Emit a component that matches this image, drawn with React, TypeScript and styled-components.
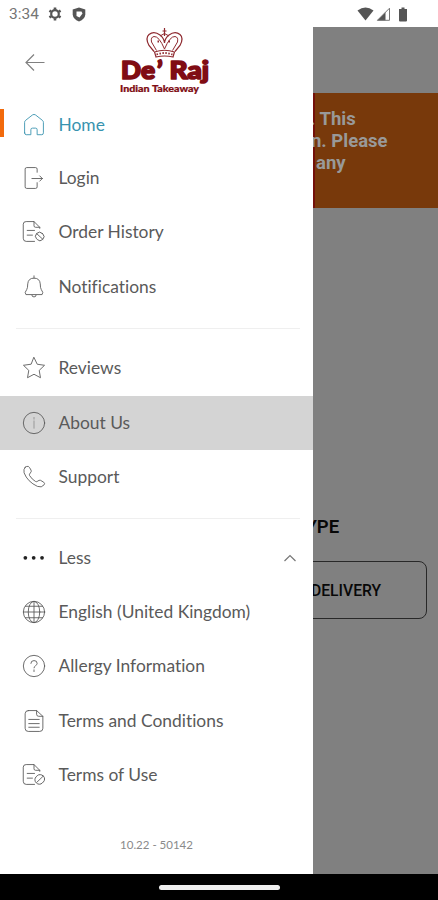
import React from 'react';
import styled, { createGlobalStyle } from 'styled-components';

const GlobalStyle = createGlobalStyle`
  * { box-sizing: border-box; }
  body { margin: 0; background: #fff; font-family: Lato, sans-serif; overflow: hidden; }
`;

const Screen = styled.div`
  width: 438px;
  height: 900px;
  display: flex;
  flex-direction: column;
  overflow: hidden;
`;

const StatusBar = styled.header`
  height: 27px;
  flex: none;
  display: flex;
  align-items: center;
  justify-content: space-between;
  padding: 1px 30px 0 9px;
  color: #757575;
  font: 400 15.5px Roboto, sans-serif;
`;

const StatusGroup = styled.div<{ $gap: number }>`
  display: flex;
  align-items: center;
  gap: ${(p) => p.$gap}px;
`;

const Content = styled.div`
  flex: 1;
  min-height: 0;
  display: flex;
`;

const Drawer = styled.nav`
  width: 313px;
  flex: none;
  background: #fff;
  display: flex;
  flex-direction: column;
`;

const DrawerHeader = styled.div`
  height: 71px;
  flex: none;
  display: flex;
  padding-left: 24px;
`;

const BackIcon = styled.svg`
  margin: 25px 72px 0 0;
  flex: none;
`;

const Row = styled.div<{ $active?: boolean; $selected?: boolean; $height?: number }>`
  height: ${(p) => p.$height ?? 54.5}px;
  flex: none;
  display: flex;
  align-items: center;
  color: ${(p) => (p.$active ? '#3893af' : '#5a5a5a')};
  background: ${(p) => (p.$selected ? '#d4d4d4' : 'transparent')};
  font-size: 17.4px;
  font-variant-ligatures: none;
  line-height: 24px;
`;

const Marker = styled.span<{ $on?: boolean }>`
  width: 4px;
  height: 28px;
  margin: -3px 18px 0 0;
  background: ${(p) => (p.$on ? '#f26a0c' : 'transparent')};
`;

const Label = styled.span`
  flex: 1;
  margin: 0 0 0 12.5px;
  white-space: nowrap;
`;

const Chevron = styled.svg`
  margin-right: 16px;
`;

const Divider = styled.hr`
  width: 284px;
  height: 1px;
  flex: none;
  border: 0;
  margin: 13.5px 0 12.5px 16px;
  background: #efefef;
`;

const Version = styled.div`
  margin-top: 34.5px;
  text-align: center;
  font-size: 11.5px;
  line-height: 16px;
  color: #8a8a8a;
`;

const Dimmed = styled.main`
  flex: 1;
  min-width: 0;
  overflow: hidden;
  background: #808080;
  display: flex;
  flex-direction: column;
  font-family: Roboto, sans-serif;
`;

const Banner = styled.section`
  height: 115px;
  flex: none;
  margin-top: 66px;
  padding-top: 15px;
  border-left: 2px solid #74100a;
  background: #78390b;
  color: #999;
  font-weight: 700;
  font-size: 18.5px;
  line-height: 22px;
`;

const BannerLine = styled.div<{ $shift: number }>`
  margin-left: ${(p) => p.$shift}px;
  white-space: nowrap;
`;

const SectionTitle = styled.h2`
  margin: 308px 0 0 -7.5px;
  font-size: 18.5px;
  line-height: 22px;
  font-weight: 600;
  color: #080808;
`;

const DeliveryButton = styled.div`
  width: 134px;
  height: 58px;
  flex: none;
  margin: 23px 0 0 -20px;
  padding: 1px 0 0 17px;
  border: 1px solid #282828;
  border-radius: 8px;
  display: flex;
  align-items: center;
  font-size: 15.7px;
  font-weight: 500;
  color: #080808;
`;

const NavBar = styled.footer`
  height: 26px;
  flex: none;
  display: flex;
  align-items: center;
  justify-content: center;
  background: #000;
`;

const HomeHandle = styled.span`
  width: 121px;
  height: 5px;
  border-radius: 3px;
  background: #eee;
`;

type IconName =
  | 'home' | 'login' | 'history' | 'terms' | 'bell' | 'star' | 'info'
  | 'phone' | 'dots' | 'globe' | 'help' | 'document';

const notedPage = (
  <>
    <path d="M12 20.500H4Q1.200 20.500 1.200 17.500V4Q1.200 1.500 4 1.500H11.500L17 7V8M11.500 1.500V5.500Q11.500 7 13 7H17" />
    <path d="M5 10H12M5 14.500H10" />
  </>
);

const shapes: Record<IconName, React.ReactNode> = {
  home: <path d="M2.500 19V9Q2.500 7.800 3.500 7L10 1.900Q11.500 .8 13 1.900L19.500 7Q20.500 7.800 20.500 9V19Q20.500 20.800 19 20.800H14.500V16Q14.500 14.500 13 14.500H10Q8.500 14.500 8.500 16V20.800H4Q2.500 20.800 2.500 19Z" />,
  login: <path d="M14.500 6V3Q14.500 1.500 13 1.500H4.500Q3 1.500 3 3V20Q3 21.500 4.500 21.500H13Q14.500 21.500 14.500 20V16M9.500 12H19.500M17 9.500 19.500 12 17 14.500" />,
  history: <>{notedPage}<rect x="13" y="12" width="8" height="7.500" rx="3.500" transform="rotate(45 17 15.750)" /><path d="m14 13 6 5.500" /></>,
  terms: <>{notedPage}<rect x="12.800" y="11" width="8.400" height="9.400" rx="4" transform="rotate(45 17 15.700)" /><path d="m14.200 18.500 5.800-5.600" /></>,
  bell: <path d="M11.500 .8V3M3.500 18.500Q2 17 4.500 14Q5.500 12.500 5.500 8.500Q6 3 11.500 3T17.500 8.500Q17.500 12.500 18.500 14Q21 17 19.500 18.500ZM9.500 19.500Q9.500 21 11.500 21T13.500 19.500" />,
  star: <path d="m11.500 1.500 3.100 6.400 7 1-5.100 4.900 1.200 7-6.200-3.300-6.200 3.300 1.200-7-5.100-4.900 7-1Z" />,
  info: <><circle cx="11.500" cy="11.500" r="10.200" /><path opacity=".55" d="M11.500 6.200V7.800M11.500 9.500V16.500" /></>,
  phone: <path d="M3 2.200 4.500 1.400Q6.200 .8 7.200 2.400L8.700 5Q9.300 6.300 8 7.600T7.200 10Q9.500 13.800 13 15.800Q14.200 16.400 15.200 15.400T17.600 14.600L20.800 16.500Q22.300 17.700 21.200 19Q18.800 22.100 14.800 20.500Q5.300 16.100 2 7.500Q1.200 4 3 2.200Z" />,
  dots: <g fill="#222" stroke="none"><circle cx="3.200" cy="11.300" r="1.800" /><circle cx="11.200" cy="11.300" r="1.800" /><circle cx="19.200" cy="11.300" r="1.800" /></g>,
  globe: <><circle cx="11.500" cy="11.500" r="10.200" /><ellipse cx="11.500" cy="11.500" rx="5.500" ry="10.200" /><path d="M11.500 1.300V21.700M1.300 11.500H21.700M3.300 6H19.700M3.300 17H19.700" /></>,
  help: <><circle cx="11.500" cy="11.500" r="10.200" /><path d="M8.500 9Q8.500 6.300 11.500 6.300T14.500 9Q14.500 10.300 13 11.200T11.500 13.300M11.500 15.200V16.800" /></>,
  document: <><path d="M6 1.500H14L20 7V18.500Q20 21.500 17 21.500H6Q3 21.500 3 18.500V4.500Q3 1.500 6 1.500ZM14 1.500V5Q14 7 16 7H20" /><path d="M6.500 10H16.500M6.500 14H16.500M6.500 17.500H16.500" /></>,
};

const Icon = ({ name }: { name: IconName }) => (
  <svg width="24" height="24" viewBox="0 0 23 23" fill="none" stroke="currentColor" strokeWidth=".85" strokeLinejoin="round" strokeLinecap="round">
    {shapes[name]}
  </svg>
);

interface ItemProps {
  icon: IconName;
  text: string;
  active?: boolean;
  selected?: boolean;
  expanded?: boolean;
  height?: number;
}

const MenuItem = ({ icon, text, active, selected, expanded, height }: ItemProps) => (
  <Row $active={active} $selected={selected} $height={height}>
    <Marker $on={active} />
    <Icon name={icon} />
    <Label>{text}</Label>
    {expanded && (
      <Chevron width="14" height="8" viewBox="0 0 14 8" fill="none" stroke="#777" strokeWidth="1.200">
        <path d="m1.500 7 5.500-5.500L12.500 7" />
      </Chevron>
    )}
  </Row>
);

const Logo = () => (
  <svg width="96" height="71" viewBox="117 27 96 71" fill="#800d14">
    <g fill="none" stroke="#8f2a30" strokeWidth="1.200">
      <path d="M164.500 28V36M162.500 31H166.500M154 51.500 149 45.500Q145 38 149 34.500Q154 30.500 160 35Q164 38 164.500 43Q165 38 169 35Q175 30.500 180 34.500Q184 38 180 45.500L175 51.500" />
      <path strokeWidth="1" d="M156.500 50.500 151.500 42Q150.500 37 154 36.500Q159 36 164.500 49Q170 36 175 36.500Q178.500 37 177.500 42L172.500 50.500M160 36 164.500 33.500 169 36" />
      <path d="M154.500 52Q164.500 48.500 174.500 52L173 57Q164.500 55 156 57Z" />
      <path strokeWidth="1.800" strokeDasharray="1.500 1.500" d="M156.500 54.500Q164.500 51.500 172.500 54.500M157.500 41.500H160.500M168.500 41.500H171.500" />
    </g>
    <g fontFamily="Lato, sans-serif" fontWeight="900" stroke="#800d14" strokeLinejoin="round">
      <text x="121" y="79.200" fontSize="25" strokeWidth="1.700" textLength="34" lengthAdjust="spacingAndGlyphs">De</text>
      <text x="157" y="79.200" fontSize="25" strokeWidth="1.700">’</text>
      <text x="169.500" y="79.200" fontSize="25" strokeWidth="1.700" textLength="39.500" lengthAdjust="spacingAndGlyphs">Raj</text>
      <text x="120" y="91.500" fontSize="8.800" strokeWidth=".2" textLength="79" lengthAdjust="spacingAndGlyphs">Indian Takeaway</text>
    </g>
  </svg>
);

export default function App() {
  return (
    <Screen>
      <GlobalStyle />
      <StatusBar>
        <StatusGroup $gap={9.5}>
          <span>3:34</span>
          <svg width="14" height="14" viewBox="0 0 14 14" fill="none" stroke="#555">
            <circle cx="7" cy="7" r="3.800" strokeWidth="2.200" />
            <path strokeWidth="2.600" d="M7 .5V2.500M7 11.500V13.500M1.400 3.700 3.100 4.700M10.900 9.300 12.600 10.300M1.400 10.300 3.100 9.300M10.900 4.700 12.600 3.700" />
          </svg>
          <svg width="14" height="15" viewBox="0 0 14 15">
            <path fill="#555" d="M7 .5 13.300 2.500V7.500Q13 12 7 14.500Q1 12 .7 7.500V2.500Z" />
            <path fill="#fff" d="M4.500 4.500H9.500L10.500 6.500 7.500 10.500 4.500 9Z" />
          </svg>
        </StatusGroup>
        <StatusGroup $gap={2}>
          <svg width="17" height="14" viewBox="0 0 17 14"><path fill="#555" d="M.5 3.500Q8.500-2.500 16.500 3.500L8.500 13.500Z" /></svg>
          <svg width="15" height="14" viewBox="0 0 15 14"><path fill="#555" d="M1 13.500 9.500 5V13.500Z" /><path fill="none" stroke="#777" d="M1.500 13.300 13.500 1.200V13.300Z" /></svg>
          <svg width="15" height="15" viewBox="0 0 15 15"><path fill="#555" d="M6.500 2H8.500V.5H11.500V2H14V13.500Q14 14.500 13 14.500H7Q6 14.500 6 13.500V2Z" /></svg>
        </StatusGroup>
      </StatusBar>
      <Content>
        <Drawer>
          <DrawerHeader>
            <BackIcon width="21" height="20" viewBox="0 0 21 20" fill="none" stroke="#808080" strokeWidth="1.200">
              <path d="M20.500 10.500H2M10 2.500 2 10.500 10 18.500" />
            </BackIcon>
            <Logo />
          </DrawerHeader>
          <MenuItem icon="home" text="Home" active height={53} />
          <MenuItem icon="login" text="Login" height={54} />
          <MenuItem icon="history" text="Order History" />
          <MenuItem icon="bell" text="Notifications" />
          <Divider />
          <MenuItem icon="star" text="Reviews" />
          <MenuItem icon="info" text="About Us" selected />
          <MenuItem icon="phone" text="Support" />
          <Divider />
          <MenuItem icon="dots" text="Less" expanded height={53} />
          <MenuItem icon="globe" text="English (United Kingdom)" />
          <MenuItem icon="help" text="Allergy Information" />
          <MenuItem icon="document" text="Terms and Conditions" />
          <MenuItem icon="terms" text="Terms of Use" />
          <Version>10.22 - 50142</Version>
        </Drawer>
        <Dimmed>
          <Banner>
            <BannerLine $shift={-5}>. This</BannerLine>
            <BannerLine $shift={-4}>n. Please</BannerLine>
            <BannerLine $shift={1}>any</BannerLine>
          </Banner>
          <SectionTitle>YPE</SectionTitle>
          <DeliveryButton>DELIVERY</DeliveryButton>
        </Dimmed>
      </Content>
      <NavBar><HomeHandle /></NavBar>
    </Screen>
  );
}
